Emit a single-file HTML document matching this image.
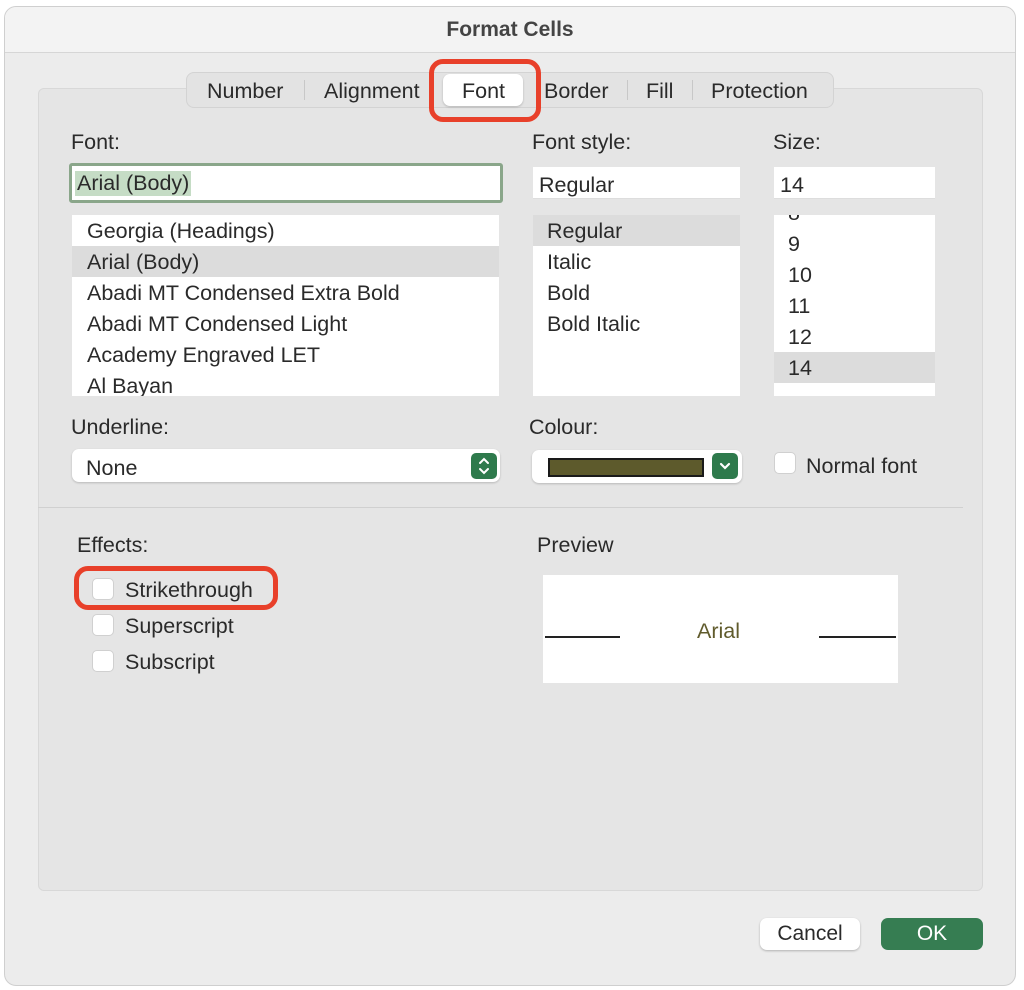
<!DOCTYPE html>
<html><head><style>
*{box-sizing:border-box;margin:0;padding:0}
body{width:1024px;height:990px;background:#fff;font-family:"Liberation Sans",sans-serif;color:#2a2a2a;position:relative;overflow:hidden}
.a{position:absolute}
.win{left:4px;top:6px;width:1012px;height:980px;background:#ececec;border:1px solid #cfcfcf;border-radius:12px;overflow:hidden}
.title{left:0;top:0;width:100%;height:46px;background:#f3f3f3;border-bottom:1px solid #d6d6d6;text-align:center;font-weight:bold;font-size:21px;line-height:46px;color:#444}
.panel{left:38px;top:88px;width:945px;height:803px;background:#e5e5e5;border:1px solid #d8d8d8;border-radius:6px}
.t{font-size:21.5px;white-space:nowrap}
.box{background:#fff}
.lst div{height:31px;line-height:33px;padding-left:15px;font-size:21.5px;white-space:nowrap}
.sel{background:#dcdcdc}
.cb{width:22px;height:22px;background:#fff;border:1px solid #d0d0d0;border-radius:5px}
.red{border:5px solid #e8402a;border-radius:14px}
</style></head><body>
<div class="a win">
<div class="a title">Format Cells</div>
</div>
<div class="a panel"></div>
<div class="a" style="left:186px;top:72px;width:648px;height:36px;background:#e3e3e3;border:1px solid #d3d3d3;border-radius:8px"></div>
<div class="a t" style="left:207px;top:79px">Number</div>
<div class="a" style="left:304px;top:80px;width:1px;height:20px;background:#c8c8c8"></div>
<div class="a t" style="left:324px;top:79px">Alignment</div>
<div class="a" style="left:443px;top:74px;width:80px;height:32px;background:#fff;border-radius:7px;box-shadow:0 1px 2px rgba(0,0,0,.2)"></div>
<div class="a t" style="left:462px;top:79px">Font</div>
<div class="a red" style="left:429px;top:59px;width:112px;height:63px"></div>
<div class="a t" style="left:544px;top:79px">Border</div>
<div class="a" style="left:627px;top:80px;width:1px;height:20px;background:#c8c8c8"></div>
<div class="a t" style="left:646px;top:79px">Fill</div>
<div class="a" style="left:692px;top:80px;width:1px;height:20px;background:#c8c8c8"></div>
<div class="a t" style="left:711px;top:79px">Protection</div>

<div class="a t" style="left:71px;top:130px">Font:</div>
<div class="a t" style="left:532px;top:130px">Font style:</div>
<div class="a t" style="left:773px;top:130px">Size:</div>
<div class="a box" style="left:69px;top:163px;width:434px;height:40px;border:3px solid #8aa68a;border-radius:3px"></div>
<div class="a t" style="left:75px;top:171px;background:#c5dcc5;padding:0 2px">Arial (Body)</div>
<div class="a box" style="left:533px;top:167px;width:207px;height:32px;border-bottom:1px solid #ddd"></div>
<div class="a t" style="left:539px;top:173px">Regular</div>
<div class="a box" style="left:774px;top:167px;width:161px;height:32px;border-bottom:1px solid #ddd"></div>
<div class="a t" style="left:780px;top:173px">14</div>

<div class="a box lst" style="left:72px;top:215px;width:427px;height:181px;overflow:hidden">
<div>Georgia (Headings)</div><div class="sel">Arial (Body)</div><div>Abadi MT Condensed Extra Bold</div><div>Abadi MT Condensed Light</div><div>Academy Engraved LET</div><div>Al Bayan</div></div>
<div class="a box lst" style="left:533px;top:215px;width:207px;height:181px">
<div class="sel" style="padding-left:14px">Regular</div><div style="padding-left:14px">Italic</div><div style="padding-left:14px">Bold</div><div style="padding-left:14px">Bold Italic</div></div>
<div class="a box lst" style="left:774px;top:215px;width:161px;height:181px;overflow:hidden">
<div style="margin-top:-18px;padding-left:14px">8</div><div style="padding-left:14px">9</div><div style="padding-left:14px">10</div><div style="padding-left:14px">11</div><div style="padding-left:14px">12</div><div class="sel" style="padding-left:14px">14</div></div>

<div class="a t" style="left:71px;top:415px">Underline:</div>
<div class="a t" style="left:529px;top:415px">Colour:</div>
<div class="a box" style="left:72px;top:449px;width:428px;height:33px;border-radius:7px;box-shadow:0 1px 2px rgba(0,0,0,.2)"></div>
<div class="a t" style="left:86px;top:456px">None</div>
<div class="a" style="left:471px;top:453px;width:26px;height:26px;background:#2e7a4c;border-radius:5px"><svg width="26" height="26"><path d="M9 10l4-4 4 4M9 16l4 4 4-4" stroke="#fff" stroke-width="2" fill="none" stroke-linecap="round"/></svg></div>
<div class="a box" style="left:532px;top:450px;width:210px;height:33px;border-radius:7px;box-shadow:0 1px 2px rgba(0,0,0,.2)"></div>
<div class="a" style="left:548px;top:458px;width:156px;height:19px;background:#5d5a2c;border:2px solid #1a1a1a"></div>
<div class="a" style="left:712px;top:453px;width:26px;height:26px;background:#2e7a4c;border-radius:5px"><svg width="26" height="26"><path d="M9 11l4 4 4-4" stroke="#fff" stroke-width="2.2" fill="none" stroke-linecap="round"/></svg></div>
<div class="a cb" style="left:774px;top:452px"></div>
<div class="a t" style="left:806px;top:454px">Normal font</div>
<div class="a" style="left:38px;top:507px;width:925px;height:1px;background:#d0d0d0"></div>

<div class="a t" style="left:77px;top:533px">Effects:</div>
<div class="a t" style="left:537px;top:533px">Preview</div>
<div class="a red" style="left:74px;top:566px;width:204px;height:44px"></div>
<div class="a cb" style="left:92px;top:578px"></div>
<div class="a t" style="left:125px;top:578px">Strikethrough</div>
<div class="a cb" style="left:92px;top:614px"></div>
<div class="a t" style="left:125px;top:614px">Superscript</div>
<div class="a cb" style="left:92px;top:650px"></div>
<div class="a t" style="left:125px;top:650px">Subscript</div>

<div class="a box" style="left:543px;top:575px;width:355px;height:108px"></div>
<div class="a" style="left:545px;top:636px;width:75px;height:2px;background:#222"></div>
<div class="a" style="left:819px;top:636px;width:77px;height:2px;background:#222"></div>
<div class="a t" style="left:697px;top:619px;color:#605b2c">Arial</div>

<div class="a box" style="left:760px;top:918px;width:100px;height:32px;border-radius:7px;box-shadow:0 1px 2px rgba(0,0,0,.25);text-align:center;line-height:32px;font-size:21px">Cancel</div>
<div class="a" style="left:881px;top:918px;width:102px;height:32px;border-radius:7px;background:#367d52;color:#fff;text-align:center;line-height:32px;font-size:21px">OK</div>
</body></html>
